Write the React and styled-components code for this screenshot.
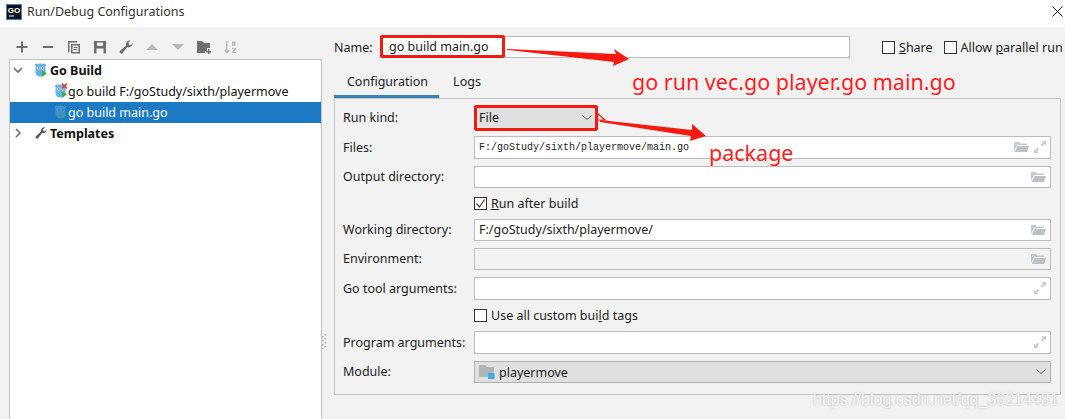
import React from "react";
import styled, { createGlobalStyle } from "styled-components";

const GlobalStyle = createGlobalStyle`
  html, body {
    margin: 0;
    padding: 0;
    background: #f2f2f2;
  }
  * {
    box-sizing: border-box;
  }
`;

/* Window */
const Page = styled.div`
  position: relative;
  width: 1065px;
  height: 419px;
  overflow: hidden;
  background: #f2f2f2;
  color: #1c1c1c;
  font-family: "Noto Sans", "Liberation Sans", sans-serif;
  font-size: 12.5px;
`;

const TitleBar = styled.div`
  display: flex;
  align-items: center;
  gap: 5px;
  height: 27px;
  padding: 0 2px 4px 6px;
  background: #ffffff;
  color: #333;
`;

const TitleText = styled.span`
  flex: 1;
`;

const Body = styled.div`
  display: flex;
  height: 392px;
`;

/* Left side */
const Sidebar = styled.div`
  display: flex;
  flex-direction: column;
  width: 322px;
  padding-left: 9px;
`;

const Toolbar = styled.div`
  display: flex;
  align-items: center;
  height: 32px;
  padding-top: 8px;
`;

const ToolSlot = styled.span`
  display: flex;
  align-items: center;
  justify-content: center;
  width: 26px;
  height: 16px;
  color: ${(p) => (p.$off ? "#b9b9b9" : "#6e6e6e")};
`;

const Tree = styled.div`
  flex: 1;
  background: #ffffff;
  border: 1px solid #c4c4c4;
  border-bottom: 0;
`;

const TreeRow = styled.div`
  display: flex;
  align-items: center;
  height: 21px;
  padding-left: ${(p) => p.$indent}px;
  padding-bottom: 1px;
  background: ${(p) => (p.$selected ? "#1b7ac3" : "transparent")};
  color: ${(p) => (p.$selected ? "#ffffff" : "#111")};
  font-weight: ${(p) => (p.$bold ? 700 : 400)};
`;

const Toggle = styled.span`
  display: flex;
  align-items: center;
  justify-content: center;
  width: 24px;
  padding-right: 8px;
  color: #6e6e6e;
`;

const NodeIcon = styled.span`
  display: flex;
  width: ${(p) => p.$w}px;
  flex: none;
`;

const Splitter = styled.div`
  display: flex;
  align-items: flex-end;
  justify-content: center;
  width: 12px;
  padding: 0 8px 70px 0;
`;

/* Right side */
const Main = styled.div`
  width: 731px;
  padding-top: 9px;
`;

const NameRow = styled.div`
  display: flex;
  align-items: center;
  height: 22px;
`;

const NameLabel = styled.span`
  flex: none;
  width: 47px;
`;

const NameInput = styled.div`
  display: flex;
  flex: none;
  align-items: center;
  width: 469px;
  height: 22px;
  padding: 0 0 1px 7px;
  background: #ffffff;
  border: 1px solid #bdbdbd;
`;

const Check = styled.label`
  display: flex;
  flex: none;
  align-items: center;
  gap: 4px;
  margin-left: ${(p) => p.$left || 0}px;
  white-space: nowrap;
`;

const Box = styled.span`
  display: flex;
  align-items: center;
  justify-content: center;
  width: 13px;
  height: 13px;
  background: #ffffff;
  border: 1px solid #333;
  color: #444;
`;

const Tabs = styled.div`
  display: flex;
  height: 28px;
  margin-top: 12px;
  width: 727px;
`;

const Tab = styled.div`
  display: flex;
  align-items: center;
  justify-content: center;
  width: ${(p) => p.$w}px;
  padding: 0 0 2px 2px;
  border-bottom: 3px solid ${(p) => (p.$active ? "#3c80bd" : "transparent")};
`;

const Panel = styled.div`
  display: grid;
  grid-template-columns: 131px 1fr;
  grid-template-rows: 23px 23px 22px 17px 22px 22px 23px 17px 23px 22px;
  row-gap: 7px;
  align-items: center;
  width: 727px;
  height: 297px;
  padding: 7px 9px 0 8px;
  border: 1px solid #c4c4c4;
`;

const FieldLabel = styled.span`
  grid-column: 1;
  padding-bottom: 1px;
  white-space: nowrap;
`;

const Field = styled.div`
  grid-column: 2;
  display: flex;
  align-items: center;
  gap: 5px;
  height: 100%;
  padding: 0 4px 1px 4px;
  background: ${(p) => (p.$off ? "#f2f2f2" : "#ffffff")};
  border: 1px solid #bdbdbd;
`;

const FieldText = styled.span`
  flex: 1;
  font-family: ${(p) => (p.$mono ? '"Liberation Mono", monospace' : "inherit")};
  font-size: ${(p) => (p.$mono ? "10px" : "12.5px")};
`;

const Combo = styled.div`
  grid-column: 2;
  display: flex;
  align-items: center;
  gap: 4px;
  width: ${(p) => p.$w || "auto"};
  height: 100%;
  padding: 0 4px 0 4px;
  background: #e0e0e0;
  border: 1px solid #b0b0b0;
`;

const CheckCell = styled.div`
  grid-column: 2;
  display: flex;
`;

/* Things drawn on top of the screenshot */
const Overlay = styled.svg`
  position: absolute;
  left: 0;
  top: 0;
  pointer-events: none;
`;

const RedBox = styled.div`
  position: absolute;
  left: ${(p) => p.$x}px;
  top: ${(p) => p.$y}px;
  width: ${(p) => p.$w}px;
  height: ${(p) => p.$h}px;
  border: 3px solid #f01c14;
  border-radius: 2px;
`;

const Note = styled.span`
  position: absolute;
  left: ${(p) => p.$x}px;
  top: ${(p) => p.$y}px;
  color: #fb1f1f;
  font-size: 21.5px;
  line-height: 28px;
  white-space: nowrap;
`;

const Watermark = styled.span`
  position: absolute;
  left: 813px;
  top: 389px;
  color: rgba(255, 255, 255, 0.75);
  font-family: "Liberation Sans", Arial, sans-serif;
  font-size: 16px;
  line-height: 22px;
  text-shadow: 0 0 2px #b4b4b4;
  white-space: nowrap;
`;

/* Icons */
const GoLogo = () => (
  <svg width="16" height="16" viewBox="0 0 16 16">
    <rect x="0.5" y="0.5" width="15" height="15" fill="#111" stroke="#3a86c8" />
    <text x="8" y="9" textAnchor="middle" fontSize="8" fontWeight="700" fill="#fff" fontFamily="Liberation Sans">
      GO
    </text>
    <rect x="3" y="11.5" width="5" height="1" fill="#fff" />
  </svg>
);

const CloseIcon = () => (
  <svg width="11" height="11" viewBox="0 0 11 11">
    <path d="M0.5 0.5 10.5 10.5M10.5 0.5 0.5 10.5" stroke="#222" strokeWidth="1" fill="none" />
  </svg>
);

const Tool = ({ d, off, size = 16 }) => (
  <ToolSlot $off={off}>
    <svg width={size} height={size} viewBox="0 0 16 16" fill="currentColor">
      <path d={d} fillRule="evenodd" />
    </svg>
  </ToolSlot>
);

const WRENCH =
  "M14.5 3.5a4 4 0 0 1-5 4.6L4.5 14a1.6 1.6 0 0 1-2.4-2.2L8 6.4A4 4 0 0 1 12.6 1.5L10.4 3.8l.6 2 2 .5z";

const TOOLS = [
  { d: "M7 2.5h2V7h4.5v2H9v4.5H7V9H2.5V7H7z" },
  { d: "M3 7h10v2H3z" },
  { d: "M2 2h9v1.5H3.5V13H2zM5 5h9v9.5H5zM6.5 6.5v6.5h6V6.5zM7.5 8h4v1h-4zM7.5 10h4v1h-4z" },
  { d: "M2 2h12v12.5H2zM5 3.5V7h6V3.5zM4.5 9.5v5h7v-5z" },
  { d: WRENCH },
  { d: "M2 11 8 5l6 6z", off: true },
  { d: "M2 5l6 6 6-6z", off: true },
  { d: "M1 2h5l2 2h6v5h-3v3H9v2H1zM12 10h1.5v2H15v1.5h-1.5V15H12v-1.5h-2V12h2z" },
  {
    d: "M4 2h1.5v9H8l-3 4-3-4h2zM10 2.5h3.5V7H12V5.8h-.5V7H10zM11.5 3.6v1.1h.5V3.6zM10 9h4v1.4l-2.2 2.4H14V14h-4v-1.3l2.2-2.5H10z",
    off: true,
  },
];

const Gopher = ({ dim, error }) => {
  const skin = dim ? "#3f8fce" : "#68b2e4";
  return (
    <svg width="16" height="18" viewBox="0 0 16 18" style={{ flex: "none" }}>
      <circle cx="2.5" cy="4" r="1.5" fill={skin} />
      <circle cx="10.5" cy="4" r="1.5" fill={skin} />
      <rect x="1.5" y="2.5" width="10" height="13" rx="4.5" fill={skin} />
      <circle cx="4.5" cy="7" r="1.6" fill={dim ? "#4a97d2" : "#eaf5fb"} />
      <circle cx="8.5" cy="7" r="1.6" fill={dim ? "#4a97d2" : "#eaf5fb"} />
      <circle cx="4.8" cy="7" r="0.7" fill={dim ? "#2b6fa5" : "#1d3a4d"} />
      <circle cx="8.8" cy="7" r="0.7" fill={dim ? "#2b6fa5" : "#1d3a4d"} />
      <path d="M8 9.5 13 12.5 8 15.5z" fill={dim ? "#38a08a" : "#3cab43"} />
      {error && <path d="M8 1.5 13 6.5M13 1.5 8 6.5" stroke="#e0343a" strokeWidth="1.6" fill="none" />}
    </svg>
  );
};

const Chevron = ({ right }) => (
  <svg width="10" height="10" viewBox="0 0 10 10">
    <path
      d={right ? "M3 1 7 5 3 9" : "M1 3 5 7 9 3"}
      stroke="#6e6e6e"
      strokeWidth="1.6"
      fill="none"
    />
  </svg>
);

const Folder = () => (
  <svg width="15" height="12" viewBox="0 0 15 12" style={{ flex: "none" }}>
    <path d="M0 1h5l1 1.5h7V4H3L0 10z" fill="#c3c8cc" />
    <path d="M3.5 5H15l-2 6H0.7z" fill="#bcc2c6" />
  </svg>
);

const Expand = () => (
  <svg width="12" height="12" viewBox="0 0 12 12" style={{ flex: "none" }}>
    <path d="M7.5 0H12v4.5L10.4 3 8 5.4 6.8 4.2 9 1.6zM4.5 12H0V7.5L1.6 9 4 6.8l1.2 1.2L3 10.4z" fill="#c8ccd0" />
  </svg>
);

const ComboArrow = () => (
  <svg width="10" height="6" viewBox="0 0 10 6" style={{ flex: "none" }}>
    <path d="M0.5 0.5 5 4.5 9.5 0.5" stroke="#666" strokeWidth="1" fill="none" />
  </svg>
);

const ModuleIcon = () => (
  <svg width="16" height="14" viewBox="0 0 16 14" style={{ flex: "none" }}>
    <path d="M0 0h6l2 2h7v10H0z" fill="#adb4ba" />
    <rect x="9" y="8" width="6.5" height="6" fill="#3dade2" />
  </svg>
);

const Tick = () => (
  <svg width="11" height="11" viewBox="0 0 11 11">
    <path d="M1.5 5.5 4.5 9 9.5 1.5" stroke="#444" strokeWidth="1.2" fill="none" />
  </svg>
);

/* Form rows */
const InputRow = ({ label, text, mono, off, folder, expand }) => (
  <>
    <FieldLabel>{label}</FieldLabel>
    <Field $off={off}>
      <FieldText $mono={mono}>{text}</FieldText>
      {folder && <Folder />}
      {expand && <Expand />}
    </Field>
  </>
);

const CheckRow = ({ checked, children }) => (
  <CheckCell>
    <Check>
      <Box>{checked && <Tick />}</Box>
      <span>{children}</span>
    </Check>
  </CheckCell>
);

const App = () => (
  <Page>
    <GlobalStyle />
    <TitleBar>
      <GoLogo />
      <TitleText>Run/Debug Configurations</TitleText>
      <CloseIcon />
    </TitleBar>
    <Body>
      <Sidebar>
        <Toolbar>
          {TOOLS.map((t) => (
            <Tool key={t.d} d={t.d} off={t.off} />
          ))}
        </Toolbar>
        <Tree>
          <TreeRow $bold $indent={0}>
            <Toggle>
              <Chevron />
            </Toggle>
            <NodeIcon $w={16}>
              <Gopher />
            </NodeIcon>
            Go Build
          </TreeRow>
          <TreeRow $indent={44}>
            <NodeIcon $w={14}>
              <Gopher error />
            </NodeIcon>
            go build F:/goStudy/sixth/playermove
          </TreeRow>
          <TreeRow $selected $indent={44}>
            <NodeIcon $w={14}>
              <Gopher dim />
            </NodeIcon>
            go build main.go
          </TreeRow>
          <TreeRow $bold $indent={0}>
            <Toggle>
              <Chevron right />
            </Toggle>
            <NodeIcon $w={16}>
              <svg width="14" height="14" viewBox="0 0 16 16" fill="#5f5f5f">
                <path d={WRENCH} />
              </svg>
            </NodeIcon>
            Templates
          </TreeRow>
        </Tree>
      </Sidebar>
      <Splitter>
        <svg width="4" height="15" viewBox="0 0 4 15" fill="#b0b0b0">
          <path d="M0 2h1.5v1.5H0zM2.5 0H4v1.5H2.5zM0 6h1.5v1.5H0zM2.5 4H4v1.5H2.5zM0 10h1.5v1.5H0zM2.5 8H4v1.5H2.5zM0 14h1.5v1H0zM2.5 12H4v1.5H2.5z" />
        </svg>
      </Splitter>
      <Main>
        <NameRow>
          <NameLabel>Name:</NameLabel>
          <NameInput>go build main.go</NameInput>
          <Check $left={32}>
            <Box />
            <span>
              <u>S</u>hare
            </span>
          </Check>
          <Check $left={11}>
            <Box />
            <span>
              Allow <u>p</u>arallel run
            </span>
          </Check>
        </NameRow>
        <Tabs>
          <Tab $active $w={105}>
            Configuration
          </Tab>
          <Tab $w={54}>Logs</Tab>
        </Tabs>
        <Panel>
          <FieldLabel>Run kind:</FieldLabel>
          <Combo $w="123px">
            <FieldText>File</FieldText>
            <ComboArrow />
          </Combo>
          <InputRow label="Files:" text="F:/goStudy/sixth/playermove/main.go" mono folder expand />
          <InputRow label="Output directory:" folder />
          <CheckRow checked>
            <u>R</u>un after build
          </CheckRow>
          <InputRow label="Working directory:" text="F:/goStudy/sixth/playermove/" folder />
          <InputRow label="Environment:" off folder />
          <InputRow label="Go tool arguments:" expand />
          <CheckRow>
            Use all custom bui<u>l</u>d tags
          </CheckRow>
          <InputRow label="Program arguments:" expand />
          <FieldLabel>Module:</FieldLabel>
          <Combo>
            <ModuleIcon />
            <FieldText>playermove</FieldText>
            <ComboArrow />
          </Combo>
        </Panel>
      </Main>
    </Body>

    <RedBox $x={380} $y={35} $w={125} $h={23} />
    <RedBox $x={474} $y={105} $w={124} $h={26} />
    <Overlay width="1065" height="419" viewBox="0 0 1065 419">
      <polygon points="507,49 616,54 614,49 629,59 613,66 614,62 507,50" fill="#f5190f" />
      <polygon points="600,120 692,130 692,124 706,136 690,141 691,136 600,122" fill="#f5190f" />
      <polygon points="597,113 605,120 597,120" fill="none" stroke="#f5190f" strokeWidth="1.2" />
    </Overlay>
    <Note $x={632} $y={68}>
      go run vec.go player.go main.go
    </Note>
    <Note $x={709} $y={139}>
      package
    </Note>
    <Watermark>https://blog.csdn.net/qq_36214481</Watermark>
  </Page>
);

export default App;
